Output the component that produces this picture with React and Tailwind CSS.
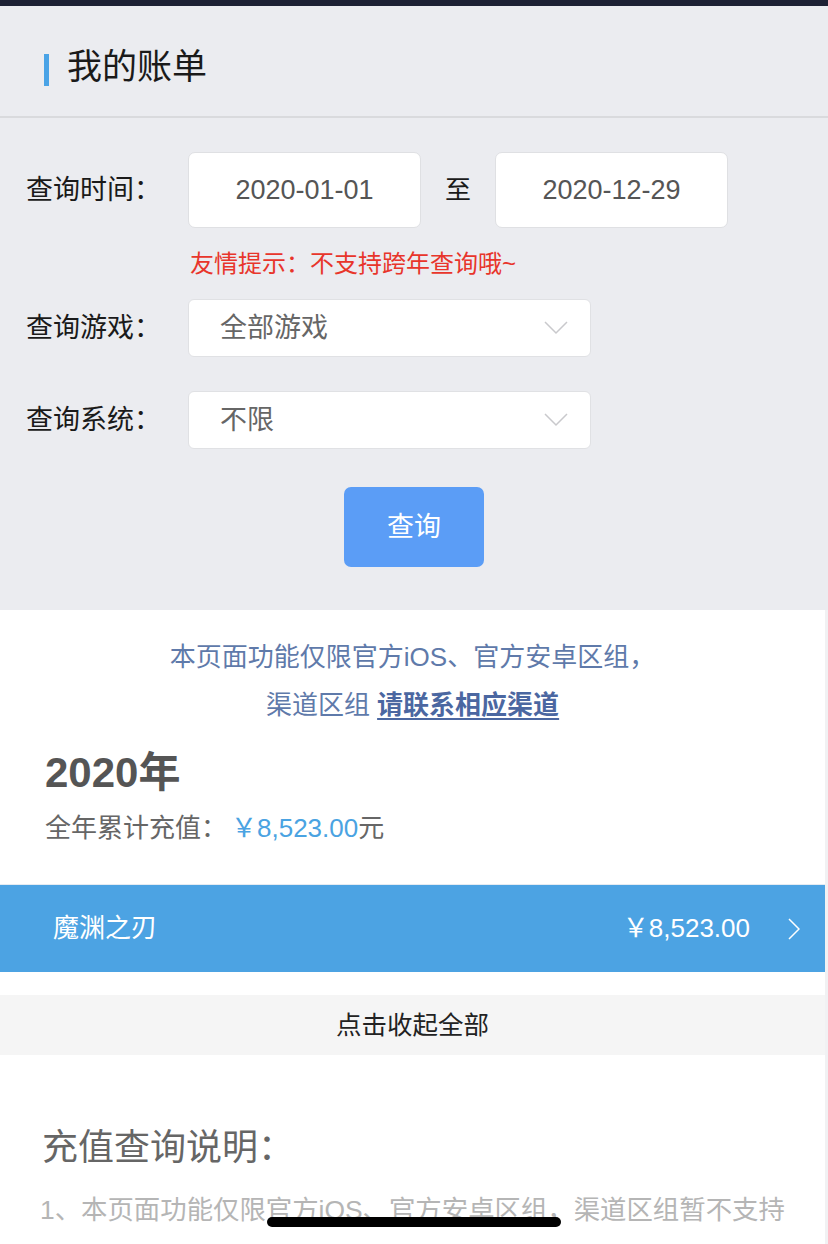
import React, { useState } from 'react'

const font = { fontFamily: '"Liberation Sans", "Noto Sans CJK SC", sans-serif' }

function DateBox({ value }) {
    return (
        <div className="w-[233px] h-[76px] bg-white rounded-[7px] border border-[#dfe0e3] flex items-center justify-center text-[27px] text-[#555]">
            {value}
        </div>
    )
}

function SelectBox({ value }) {
    return (
        <div className="w-[403px] h-[58px] bg-white rounded-[6px] border border-[#e0e1e4] flex items-center justify-between pl-[31px] pr-[22px]">
            <span className="text-[27px] text-[#666]">{value}</span>
            <svg width="24" height="14" viewBox="0 0 24 14" fill="none">
                <path d="M1 1 L12 12 L23 1" stroke="#c9c9cc" strokeWidth="1.5" />
            </svg>
        </div>
    )
}

export default function App() {
    const [start] = useState('2020-01-01')
    const [end] = useState('2020-12-29')
    const [games] = useState([{ name: '魔渊之刃', amount: '￥8,523.00' }])

    return (
        <div style={font} className="relative w-[828px] h-[1244px] overflow-hidden bg-[#f1f1f3]">
            <div className="h-[6px] bg-[#1d2134]"></div>

            {/* title */}
            <div className="h-[112px] bg-[#ebecf0] border-b-2 border-[#d9dadd] flex items-center pl-[44px] pt-[10px]">
                <span className="w-[5px] h-[32px] bg-[#4aa3e6] mt-[8px]"></span>
                <h1 className="ml-[18px] text-[35px] leading-none text-[#1a1a1a]">我的账单</h1>
            </div>

            {/* query form */}
            <div className="bg-[#ebecf0] pt-[34px] pb-[43px] pl-[26px]">
                <div className="flex items-center">
                    <span className="w-[162px] text-[27px] text-[#1a1a1a]">查询时间：</span>
                    <DateBox value={start} />
                    <span className="mx-[24px] text-[26px] text-[#1a1a1a]">至</span>
                    <DateBox value={end} />
                </div>
                <p className="ml-[164px] mt-[20px] text-[24px] leading-[32px] text-[#e8352b]">友情提示：不支持跨年查询哦~</p>
                <div className="flex items-center mt-[19px]">
                    <span className="w-[162px] text-[27px] text-[#1a1a1a]">查询游戏：</span>
                    <SelectBox value="全部游戏" />
                </div>
                <div className="flex items-center mt-[34px]">
                    <span className="w-[162px] text-[27px] text-[#1a1a1a]">查询系统：</span>
                    <SelectBox value="不限" />
                </div>
                <div className="flex justify-center mt-[38px] pr-[26px]">
                    <button className="w-[140px] h-[80px] rounded-[7px] bg-[#5b9df6] text-white text-[27px]">查询</button>
                </div>
            </div>

            {/* results */}
            <div className="w-[825px] bg-white h-full">
                <div className="pt-[23px] text-center text-[26px] leading-[48px] text-[#5f7aaa]">
                    <p>本页面功能仅限官方iOS、官方安卓区组，</p>
                    <p>
                        渠道区组 <span className="font-bold underline underline-offset-4 text-[#4b67a1]">请联系相应渠道</span>
                    </p>
                </div>
                <div className="px-[45px] pb-[38px]">
                    <h2 className="mt-[18px] text-[42px] leading-[52px] font-bold text-[#555]">2020年</h2>
                    <p className="mt-[11px] text-[26px] leading-[36px] text-[#666]">
                        全年累计充值：<span className="ml-[4px] text-[#4aa3e2]">￥8,523.00</span>元
                    </p>
                </div>
                <div className="border-t border-[#e4ebf2]">
                    {games.map((g) => (
                        <div key={g.name} className="h-[87px] bg-[#4ca3e3] flex items-center justify-between pl-[53px] pr-[25px] text-white">
                            <span className="text-[26px]">{g.name}</span>
                            <div className="flex items-center">
                                <span className="text-[26px]">{g.amount}</span>
                                <svg className="ml-[38px]" width="12" height="22" viewBox="0 0 12 22" fill="none">
                                    <path d="M1 1 L11 11 L1 21" stroke="#ffffff" strokeWidth="1.5" />
                                </svg>
                            </div>
                        </div>
                    ))}
                </div>
                <div className="mt-[23px] h-[60px] bg-[#f5f5f5] flex items-center justify-center text-[25.5px] text-[#222]">
                    点击收起全部
                </div>
                <div className="px-[42px] pt-[69px]">
                    <h3 className="text-[36px] leading-[48px] text-[#666]">充值查询说明：</h3>
                    <p className="mt-[20px] -ml-[2px] text-[26.4px] leading-[36px] text-[#b5b5b5] whitespace-nowrap">1、本页面功能仅限官方iOS、官方安卓区组，渠道区组暂不支持</p>
                </div>
            </div>

            {/* home indicator */}
            <div className="absolute left-[267px] top-[1217px] w-[294px] h-[10px] rounded-full bg-black"></div>
        </div>
    )
}
